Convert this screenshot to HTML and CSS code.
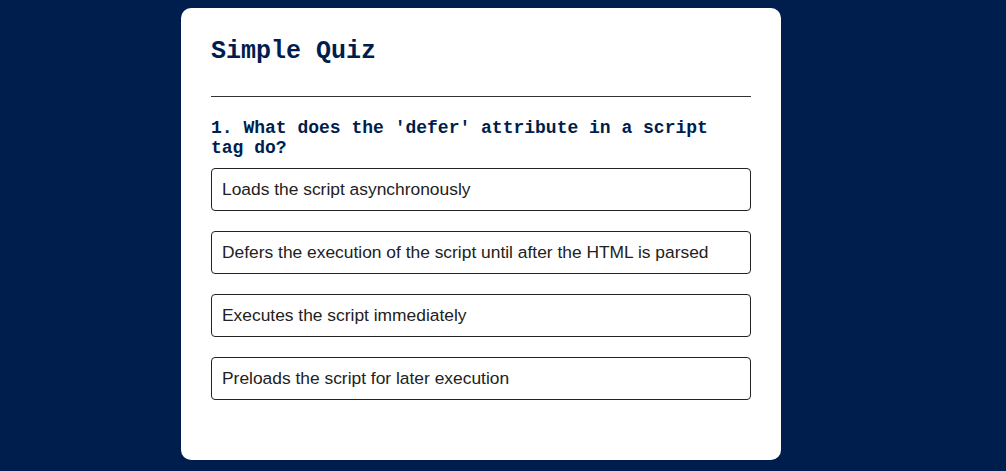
FILE: index.html
```html
<!DOCTYPE html>
<html lang="en">
<head>
<meta charset="utf-8">
<title>Simple Quiz</title>
<link rel="stylesheet" href="styles.css">
</head>
<body>
<div class="page">
  <div class="app">
    <h1 class="title">Simple Quiz</h1>
    <div class="quiz">
      <h2 class="question">1. What does the 'defer' attribute in a script tag do?</h2>
      <div class="answers">
        <button class="btn">Loads the script asynchronously</button>
        <button class="btn">Defers the execution of the script until after the HTML is parsed</button>
        <button class="btn">Executes the script immediately</button>
        <button class="btn">Preloads the script for later execution</button>
      </div>
    </div>
  </div>
</div>
</body>
</html>
```

FILE: styles.css
```css
* {
  box-sizing: border-box;
}
html, body {
  margin: 0;
  padding: 0;
  background: #001e4d;
}
body {
  min-height: 471px;
}
.page {
  width: 962px;
  padding-top: 8px;
}
.app {
  width: 600px;
  margin: 0 auto;
  background: #fff;
  border-radius: 10px;
  padding: 30px 30px 60px;
}
.title {
  margin: 0;
  font-family: "Courier New", "Liberation Mono", monospace;
  font-size: 25px;
  font-weight: 700;
  color: #001e4d;
  line-height: 28px;
  padding-bottom: 30px;
  border-bottom: 1px solid #333;
}
.quiz {
  padding-top: 21px;
}
.question {
  margin: 0 0 10px;
  padding-right: 2px;
  font-family: "Courier New", "Liberation Mono", monospace;
  font-size: 18px;
  font-weight: 700;
  line-height: 20px;
  color: #001e4d;
}
.answers {
  display: flex;
  flex-direction: column;
  gap: 20px;
}
.btn {
  display: block;
  width: 100%;
  margin: 0;
  background: #fff;
  color: #222;
  font-family: "Liberation Sans", Arial, sans-serif;
  font-size: 17.4px;
  line-height: 21px;
  text-align: left;
  padding: 10px;
  border: 1px solid #222;
  border-radius: 4px;
}
```
